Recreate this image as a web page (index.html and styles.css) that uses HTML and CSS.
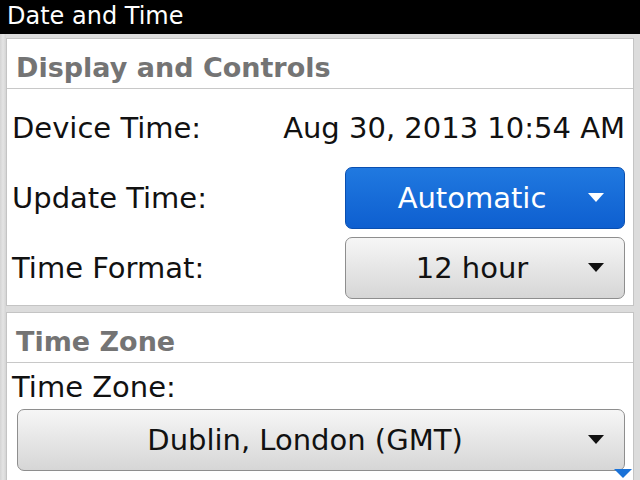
FILE: index.html
```html
<!DOCTYPE html>
<html>
<head>
<meta charset="utf-8">
<link rel="stylesheet" href="styles.css">
</head>
<body>
<div class="screen">
  <div class="titlebar">Date and Time</div>
  <div class="content">
    <section class="panel first">
      <div class="panel-header">Display and Controls</div>
      <div class="rows">
        <div class="row">
          <span class="label">Device Time:</span>
          <span class="value">Aug 30, 2013 10:54 AM</span>
        </div>
        <div class="row">
          <span class="label">Update Time:</span>
          <div class="dropdown blue"><span class="dd-text">Automatic</span><span class="arrow"></span></div>
        </div>
        <div class="row">
          <span class="label">Time Format:</span>
          <div class="dropdown gray"><span class="dd-text">12 hour</span><span class="arrow"></span></div>
        </div>
      </div>
    </section>
    <section class="panel second">
      <div class="panel-header">Time Zone</div>
      <div class="tz">
        <div class="label tz-label">Time Zone:</div>
        <div class="dropdown gray wide"><span class="dd-text">Dublin, London (GMT)</span><span class="arrow"></span></div>
      </div>
    </section>
  </div>
  <span class="scroll-hint"></span>
</div>
</body>
</html>
```

FILE: styles.css
```css
html, body {
  margin: 0;
  padding: 0;
}
body {
  width: 640px;
  height: 480px;
  overflow: hidden;
  font-family: "DejaVu Sans", sans-serif;
  background: #dcdcdc;
}
.screen {
  position: relative;
  width: 640px;
  height: 480px;
  overflow: hidden;
}
.titlebar {
  height: 34px;
  background: #000;
  color: #fff;
  font-size: 24px;
  line-height: 32px;
  padding-left: 7px;
}
.content {
  display: flex;
  flex-direction: column;
  gap: 6px;
  padding: 4px 6px 0 6px;
  background: linear-gradient(to right, #d4d4d4 0, #e4e4e4 3px, #d4d4d4 6px, #dcdcdc 6px);
}
.panel {
  background: #fff;
  border: 1px solid #c4c4c4;
}
.panel-header {
  height: 49px;
  border-bottom: 1px solid #c8c8c8;
  font-weight: bold;
  font-size: 27px;
  color: #747474;
  line-height: 57px;
  padding-left: 9px;
  box-sizing: content-box;
}
.rows {
  display: flex;
  flex-direction: column;
  gap: 8px;
  padding: 8px 8px 6px 5px;
}
.row {
  height: 62px;
  display: flex;
  align-items: center;
  justify-content: space-between;
}
.label {
  font-size: 29px;
  color: #111;
}
.value {
  font-size: 29px;
  color: #111;
}
.dropdown {
  box-sizing: border-box;
  width: 280px;
  height: 62px;
  border-radius: 7px;
  display: flex;
  align-items: center;
  position: relative;
  font-size: 29px;
}
.dd-text {
  flex: 1;
  text-align: center;
  padding-right: 26px;
}
.arrow {
  position: absolute;
  right: 20px;
  top: 25px;
  width: 0;
  height: 0;
  border-left: 8px solid transparent;
  border-right: 8px solid transparent;
  border-top: 9px solid currentColor;
}
.dropdown.blue {
  background: linear-gradient(#2079e0, #0e5fd0);
  border: 1px solid #0a4fb0;
  color: #fff;
}
.dropdown.gray {
  background: linear-gradient(#f6f6f6, #d6d6d6);
  border: 1px solid #8e8e8e;
  color: #111;
}
.dropdown.wide {
  width: 608px;
}
.tz {
  padding: 0 8px 40px 5px;
}
.tz-label {
  height: 46px;
  line-height: 48px;
}
.tz .dropdown {
  margin-left: 5px;
}
.tz .dd-text {
  padding-right: 32px;
}
.scroll-hint {
  position: absolute;
  left: 614px;
  top: 469px;
  width: 0;
  height: 0;
  border-left: 9px solid transparent;
  border-right: 9px solid transparent;
  border-top: 9px solid #1a72d8;
}
```
